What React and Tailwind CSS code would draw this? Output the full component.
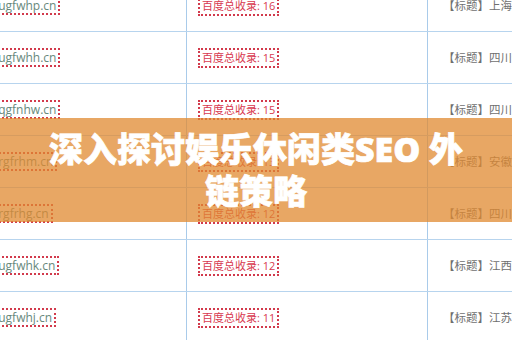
import React from 'react';

const rows = [
  { site: 'ougfwhp.cn', count: 16, title: '上海娱乐休闲会所推荐' },
  { site: 'ougfwhh.cn', count: 15, title: '四川休闲娱乐场所大全' },
  { site: 'oqgfnhw.cn', count: 15, title: '四川成都娱乐休闲指南' },
  { site: 'orgfrhm.cn', count: 13, title: '安徽合肥休闲娱乐好去处' },
  { site: 'orgfrhg.cn', count: 12, title: '四川绵阳娱乐休闲中心' },
  { site: 'ougfwhk.cn', count: 12, title: '江西南昌休闲娱乐推荐' },
  { site: 'ougfwhj.cn', count: 11, title: '江苏南京娱乐休闲会馆' },
];

function SiteRow({ site, count, title }) {
  return (
    <div className="flex h-[52px] border-b border-[#b7d4ee]">
      <div className="w-[197px] shrink-0 border-r border-[#a9cbea] flex items-center">
        <span className="-ml-[3px] border-2 border-dotted border-[#d23a4c] px-[2px] leading-[15px] text-[12px] text-[#67897c] whitespace-nowrap">
          {site}
        </span>
      </div>
      <div className="w-[241px] shrink-0 border-r border-[#a9cbea] flex items-center pl-[11px]">
        <span className="border-2 border-dotted border-[#d23a4c] px-[2px] leading-[16px] text-[11px] text-[#d83a50] whitespace-nowrap">
          百度总收录: {count}
        </span>
      </div>
      <div className="flex-1 flex items-center pl-[15px] text-[11.5px] text-[#6f6f6f] whitespace-nowrap">
        【标题】{title}
      </div>
    </div>
  );
}

export default function App() {
  return (
    <div className="relative w-[512px] h-[340px] overflow-hidden bg-white font-['Open_Sans','Noto_Sans_CJK_SC',sans-serif]">
      <div className="-mt-[20px] -ml-[10px] w-[640px]">
        {rows.map((r) => (
          <SiteRow key={r.site} {...r} />
        ))}
      </div>

      {/* title banner over the table */}
      <div className="absolute inset-x-0 top-[118px] h-[104px] bg-[#e08a30]/75 flex items-center justify-center">
        <h1 className="text-center text-white font-black text-[34px] leading-[42px] [-webkit-text-stroke:0.7px_white]">
          深入探讨娱乐休闲类SEO 外<br />链策略
        </h1>
      </div>
    </div>
  );
}
